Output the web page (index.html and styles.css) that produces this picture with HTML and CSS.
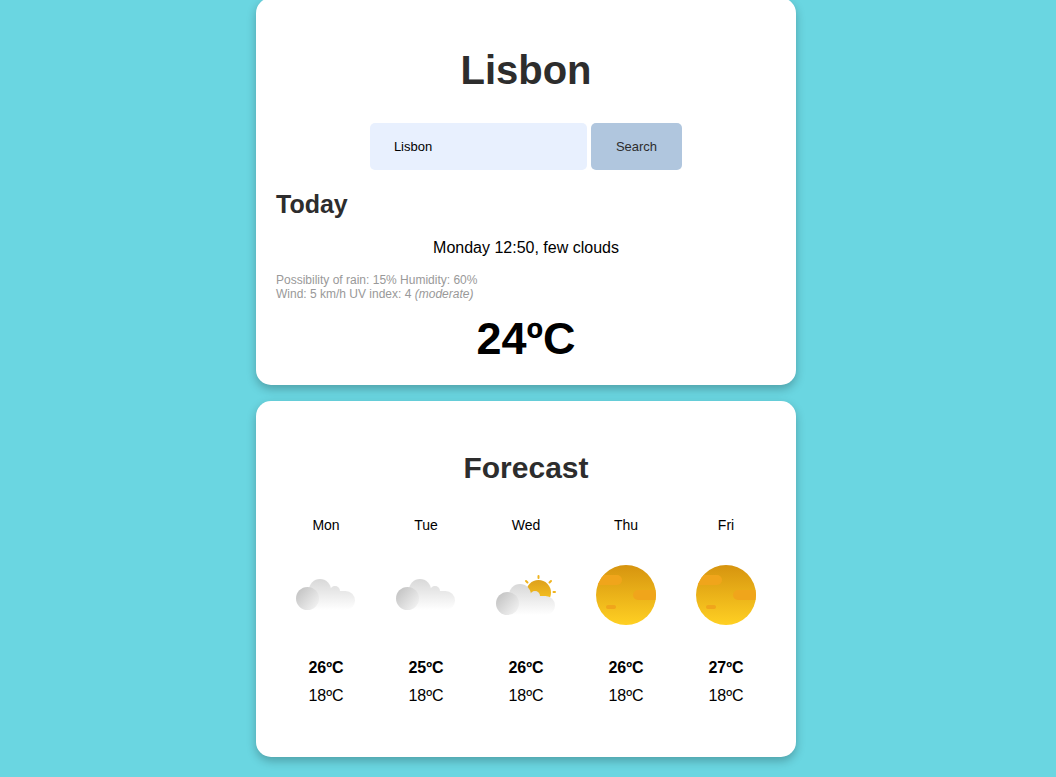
FILE: index.html
```html
<!DOCTYPE html>
<html lang="en">
<head>
  <meta charset="utf-8">
  <meta name="viewport" content="width=device-width, initial-scale=1">
  <title>Weather</title>
  <link rel="stylesheet" href="styles.css">
</head>
<body>
  <svg class="defs" width="0" height="0" aria-hidden="true">
    <defs>
      <linearGradient id="puff" gradientUnits="userSpaceOnUse" x1="0" y1="14" x2="0" y2="45">
        <stop offset="0" stop-color="#d8d8d8"/>
        <stop offset="1" stop-color="#ffffff"/>
      </linearGradient>
      <linearGradient id="ball" x1="0.1" y1="0.2" x2="0.9" y2="0.9">
        <stop offset="0" stop-color="#c6c6c6"/>
        <stop offset="1" stop-color="#f2f2f2"/>
      </linearGradient>
      <linearGradient id="gold" x1="0" y1="0" x2="0" y2="1">
        <stop offset="0" stop-color="#d6940f"/>
        <stop offset="1" stop-color="#ffd023"/>
      </linearGradient>
      <linearGradient id="glow" x1="0" y1="0" x2="0" y2="1">
        <stop offset="0" stop-color="#dda01b"/>
        <stop offset="1" stop-color="#fdcb22"/>
      </linearGradient>
      <symbol id="cloud" viewBox="0 0 60 60">
        <g fill="url(#puff)">
          <circle cx="24" cy="25" r="11"/>
          <circle cx="39" cy="26" r="5"/>
          <path d="M11 45V28H14V26H49.500A9.500 9.500 0 0 1 49.500 45Z"/>
        </g>
        <circle cx="11.500" cy="33.500" r="11.500" fill="url(#ball)"/>
      </symbol>
      <symbol id="partly" viewBox="0 0 60 60">
        <path fill="none" stroke="#f0b41f" stroke-width="2" stroke-linecap="round" d="M42.500 11V13M53.500 17.500L55 16M31.500 17.500L30 16M57.500 27H59"/>
        <circle cx="42.500" cy="27.500" r="12.500" fill="url(#glow)"/>
        <use href="#cloud" y="5" width="60" height="60"/>
      </symbol>
      <symbol id="sun" viewBox="0 0 60 60">
        <clipPath id="disc"><circle cx="30" cy="30" r="30"/></clipPath>
        <g clip-path="url(#disc)">
          <rect width="60" height="60" fill="url(#gold)"/>
          <g fill="#f0a51b">
            <rect x="-10" y="10" width="36" height="10" rx="5"/>
            <rect x="37" y="25" width="36" height="10" rx="5"/>
            <rect x="10" y="40" width="10" height="4" rx="2"/>
          </g>
        </g>
      </symbol>
    </defs>
  </svg>

  <main class="app">
    <section class="card current">
      <h1 class="city">Lisbon</h1>
      <form class="search">
        <input class="search-input" type="text" value="Lisbon" aria-label="City">
        <button class="search-button" type="button">Search</button>
      </form>
      <h2 class="today">Today</h2>
      <p class="summary">Monday 12:50, few clouds</p>
      <p class="details">Possibility of rain: 15% Humidity: 60%<br>Wind: 5 km/h UV index: 4 <em>(moderate)</em></p>
      <p class="temperature">24ºC</p>
    </section>

    <section class="card forecast">
      <h2 class="forecast-title">Forecast</h2>
      <ul class="days">
        <li class="day"><span class="name">Mon</span><svg class="icon" role="img" aria-label="Cloudy"><use href="#cloud"/></svg><strong class="high">26ºC</strong><span class="low">18ºC</span></li>
        <li class="day"><span class="name">Tue</span><svg class="icon" role="img" aria-label="Cloudy"><use href="#cloud"/></svg><strong class="high">25ºC</strong><span class="low">18ºC</span></li>
        <li class="day"><span class="name">Wed</span><svg class="icon" role="img" aria-label="Partly cloudy"><use href="#partly"/></svg><strong class="high">26ºC</strong><span class="low">18ºC</span></li>
        <li class="day"><span class="name">Thu</span><svg class="icon" role="img" aria-label="Sunny"><use href="#sun"/></svg><strong class="high">26ºC</strong><span class="low">18ºC</span></li>
        <li class="day"><span class="name">Fri</span><svg class="icon" role="img" aria-label="Sunny"><use href="#sun"/></svg><strong class="high">27ºC</strong><span class="low">18ºC</span></li>
      </ul>
    </section>
  </main>
</body>
</html>
```
FILE: styles.css
```css
* {
  box-sizing: border-box;
}

body {
  margin: 0;
  padding-right: 4px;
  background: #6ad6e1;
  color: #000;
  font-family: "Liberation Sans", Arial, sans-serif;
  font-size: 16px;
}

.defs {
  position: absolute;
}

.app {
  display: flex;
  flex-direction: column;
  gap: 16px;
  max-width: 540px;
  margin: -2px auto 0;
  padding-bottom: 20px;
}

.card {
  padding: 48px 20px 20px;
  border-radius: 15px;
  background: #fff;
  box-shadow: 0 4px 10px rgba(0, 0, 0, 0.25);
}

h1,
h2,
p {
  margin: 0;
}

h1,
h2 {
  color: #2d2d2d;
}

.city {
  font-size: 40px;
  line-height: 48px;
  text-align: center;
}

.search {
  display: flex;
  justify-content: center;
  gap: 4px;
  margin-top: 29px;
}

.search-input,
.search-button {
  padding: 16px 24px;
  border: 0;
  border-radius: 5px;
  font-family: inherit;
  font-size: 13px;
  line-height: 15px;
}

.search-input {
  width: 217px;
  background: #e8f0fe;
  color: #000;
}

.search-button {
  padding: 16px 25px;
  background: #b0c6de;
  color: #2d2d2d;
}

.today {
  margin-top: 20px;
  font-size: 25px;
  line-height: 28px;
}

.summary {
  margin-top: 20px;
  line-height: 20px;
  text-align: center;
}

.details {
  margin-top: 15px;
  color: #999;
  font-size: 12px;
  line-height: 14px;
}

.temperature {
  margin-top: 12px;
  font-size: 45px;
  font-weight: bold;
  line-height: 52px;
  text-align: center;
}

.forecast {
  padding-bottom: 50px;
}

.forecast-title {
  font-size: 30px;
  line-height: 38px;
  text-align: center;
}

.days {
  display: grid;
  grid-template-columns: repeat(5, 1fr);
  margin: 30px 0 0;
  padding: 0;
  list-style: none;
}

.day {
  display: flex;
  flex-direction: column;
  align-items: center;
}

.name {
  font-size: 14px;
  line-height: 16px;
}

.icon {
  width: 60px;
  height: 60px;
  margin: 32px 0;
}

.high,
.low {
  line-height: 22px;
}

.low {
  margin-top: 6px;
}
```
